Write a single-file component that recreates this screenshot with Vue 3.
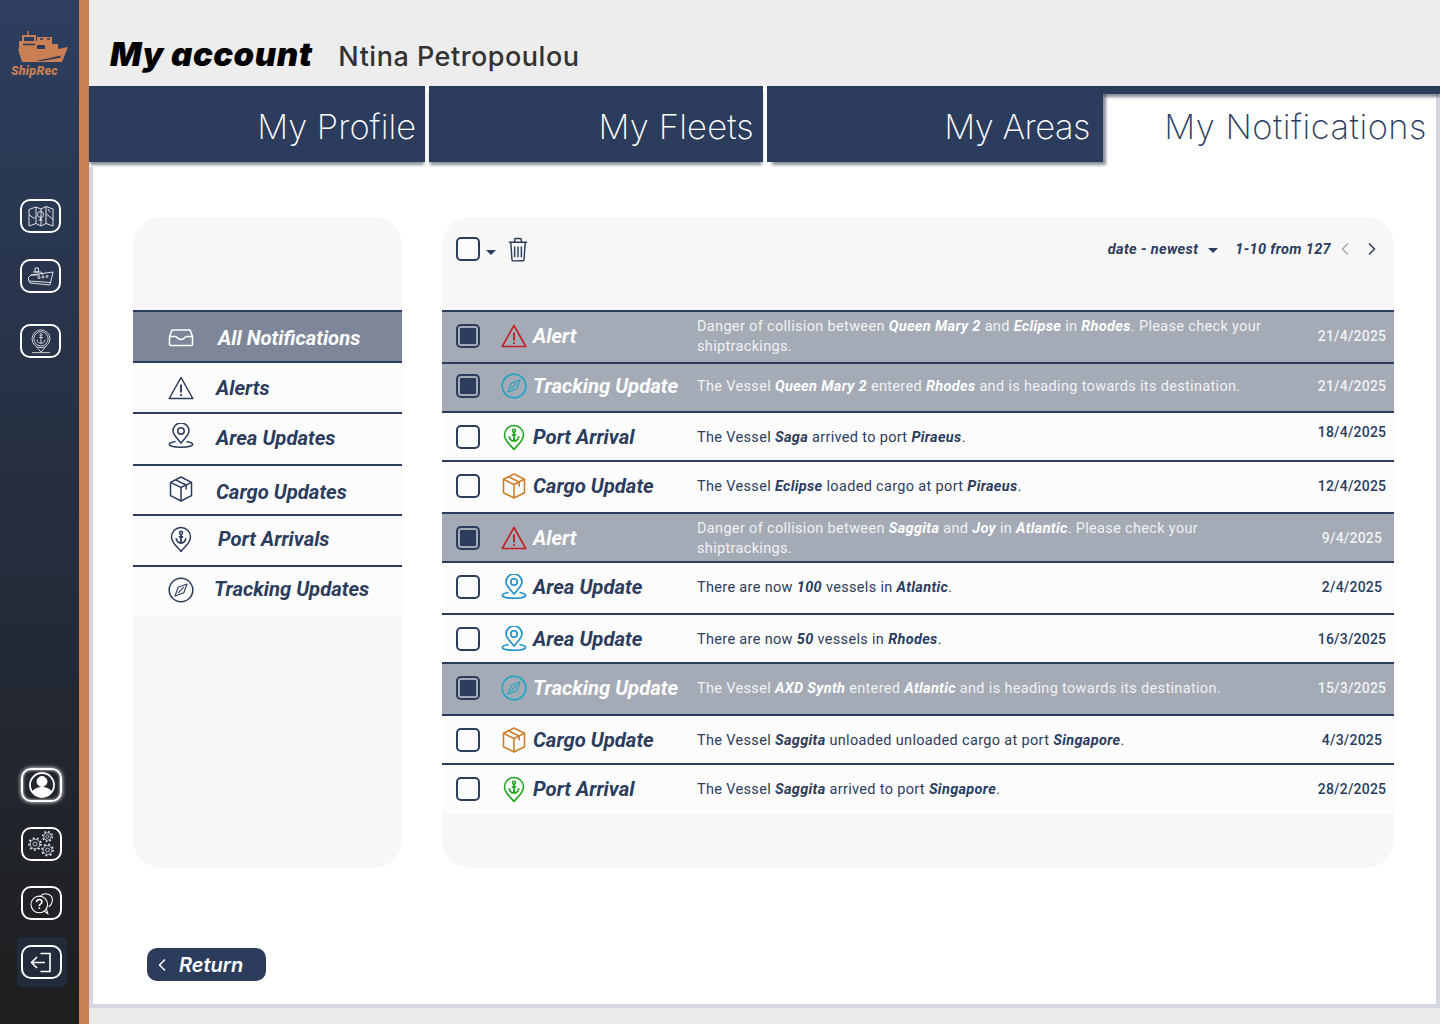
<template>
  <div class="page">
    <svg class="defs" xmlns="http://www.w3.org/2000/svg">
      <symbol id="i-inbox" viewBox="0 0 26 26">
        <path d="M1.500 11.500 4 5h18l2.500 6.500v8a1 1 0 0 1-1 1h-21a1 1 0 0 1-1-1z" />
        <path d="M1.500 11.500h6c1.500 0 2 3 5.500 3s4-3 5.500-3h6" />
      </symbol>
      <symbol id="i-alert" viewBox="0 0 26 26">
        <path d="M13 2.500 24.800 23.500H1.200z" stroke-linejoin="round" />
        <path d="M13 9.500v8M13 19.200v1.800" stroke-width="1.900" />
      </symbol>
      <symbol id="i-area" viewBox="0 0 26 26">
        <path d="M13 20C9.500 15.500 5 12 5 8a8 8 0 0 1 16 0c0 4-4.500 7.500-8 12z" />
        <circle cx="13" cy="8" r="3.200" />
        <path d="M7.500 18.500C3.500 19.200 1.300 20.300 1.300 21.600c0 1.500 5.200 2.700 11.700 2.700s11.700-1.200 11.700-2.700c0-1.300-2.200-2.400-6.200-3.100" />
      </symbol>
      <symbol id="i-cargo" viewBox="0 0 26 26">
        <path d="M13 1 23.500 6.300v13.400L13 25 2.500 19.700V6.300z" stroke-linejoin="round" />
        <path d="M2.500 6.300 13 11.500l10.500-5.200M13 11.500V25M7.500 3.800l10.700 5.200v4.500" />
      </symbol>
      <symbol id="i-port" viewBox="0 0 26 26">
        <path d="M13 25.500C10 21 3.500 17.500 3.500 11a9.500 9.500 0 0 1 19 0c0 6.500-6.500 10-9.500 14.500z" stroke-linejoin="round" />
        <circle cx="13" cy="6.800" r="1.500" />
        <path d="M13 8.300V17M8.300 12.300c0 2.700 2 4.700 4.700 4.700s4.700-2 4.700-4.700M10.800 10.800h4.400" stroke-width="1.800" />
      </symbol>
      <symbol id="i-track" viewBox="0 0 26 26">
        <circle cx="13" cy="13" r="11.800" />
        <path d="M19 7 15.800 15.800 7 19l3.200-8.800zM10.200 15.800l5.600-5.600" stroke-linejoin="round" stroke-width="1.100" />
      </symbol>
      <symbol id="s-map" viewBox="0 0 28 24">
        <path d="M2 5 9 2.500l5 2 5-2.500 7 2.500v17L19 19l-5 2.500-5-2.500-7 2.500z" />
        <path d="M9 2.500V19M14 4.500v17M19 2v17M2 10l5 4 2-2M19 9l7 6M21 4.500l2 3" />
        <circle cx="13.500" cy="10" r="3" />
        <path d="M13.500 13v3M11.500 15.500h4" />
      </symbol>
      <symbol id="s-ship" viewBox="0 0 28 24">
        <path d="M8 3.500h3.500v4H8zM6 7.500h8l2 3M4 10.500h9" />
        <path d="M1.500 13 4 10.500 26 7.500 23 20.500 3 18.500 1.500 16z" stroke-linejoin="round" />
        <circle cx="12" cy="13" r="1" />
        <circle cx="16" cy="12.500" r="1" />
        <circle cx="20" cy="12" r="1" />
        <path d="M2 16.500 23.500 18" />
      </symbol>
      <symbol id="s-pin" viewBox="0 0 28 28">
        <circle cx="14" cy="11" r="10" />
        <circle cx="14" cy="11" r="8" />
        <circle cx="14" cy="6.500" r="1.200" />
        <path d="M14 7.700V16M9.500 12c0 2.500 2 4 4.500 4s4.500-1.500 4.500-4M12 9.500h4M9 20l5 6 5-6M4 26.500h20" />
      </symbol>
      <symbol id="s-user" viewBox="0 0 28 28">
        <circle cx="14" cy="14" r="12" stroke-width="1.800" />
        <circle cx="14" cy="10.500" r="5" fill="currentColor" />
        <path d="M4.500 20.500C7 17.500 10 16.500 14 16.500s7 1 9.500 4C21 24 18 25.500 14 25.500s-7-1.500-9.500-5z" fill="currentColor" />
      </symbol>
      <symbol id="s-gears" viewBox="0 0 30 28">
        <circle cx="8" cy="14" r="6" stroke-width="1.700" stroke-dasharray="1.900 2.300" />
        <circle cx="8" cy="14" r="4.800" />
        <circle cx="8" cy="14" r="2" />
        <circle cx="20.500" cy="6.500" r="4.900" stroke-width="1.500" stroke-dasharray="1.700 2.150" />
        <circle cx="20.500" cy="6.500" r="3.800" />
        <circle cx="20.500" cy="6.500" r="1.600" />
        <circle cx="20.500" cy="20" r="5.600" stroke-width="1.700" stroke-dasharray="1.900 2.500" />
        <circle cx="20.500" cy="20" r="4.400" />
        <circle cx="20.500" cy="20" r="1.900" />
      </symbol>
      <symbol id="s-help" viewBox="0 0 28 28">
        <path d="M13 5.200a9 9 0 0 1 8.500-1.500c5 1.500 6 7 3.500 11-.9 1.400-1.800 2.400-3 3" />
        <circle cx="11.500" cy="15" r="9.300" />
        <path d="M17 22.500l4 3-1.300-5" />
        <path d="M8.500 12.500c0-4 6-4 6 0 0 2-3 2-3 4.500M11.500 18.500v1.600" stroke-width="1.700" />
      </symbol>
      <symbol id="s-exit" viewBox="0 0 28 24">
        <path d="M3.500 12H17M9 6.500 3.500 12 9 17.500M12.500 3H22v18h-9.500" />
      </symbol>
    </svg>

    <aside class="sidebar">
      <div class="logo">
        <svg class="logo-ship" viewBox="12 30 60 35" xmlns="http://www.w3.org/2000/svg">
          <path d="M27.500 31h1.400v4h-1.400zM22 35h14v6h-2v-4H24v4h-2zM19 41h18v8H19zM37 37h8v8h-8zM45 37h7v8h-7zM45 44h13v5H45z" fill="#c97e54" />
          <path d="M18 49h40l10-2-6 15H22z" fill="#c97e54" />
          <path d="M23 44.500h12M40 39h3M47 39h3" stroke="#2b3a58" stroke-width="1.600" />
          <path d="M36 61l25-5.500-.8 2.200L42 61z" fill="#2b3a58" />
        </svg>
        <div class="logo-text">ShipRec</div>
      </div>
      <nav class="side-top">
        <a v-for="n in topNav" :key="n" class="side-btn"><svg class="side-ico"><use :href="`#s-${n}`" /></svg></a>
      </nav>
      <nav class="side-bottom">
        <a class="side-btn glow"><svg class="side-ico user"><use href="#s-user" /></svg></a>
        <a class="side-btn"><svg class="side-ico gears"><use href="#s-gears" /></svg></a>
        <a class="side-btn"><svg class="side-ico help"><use href="#s-help" /></svg></a>
        <div class="exit-wrap">
          <a class="side-btn"><svg class="side-ico exit"><use href="#s-exit" /></svg></a>
        </div>
      </nav>
    </aside>

    <main class="main">
      <header class="header">
        <h1>My account</h1>
        <span class="user-name">Ntina Petropoulou</span>
      </header>

      <div class="tabs">
        <div v-for="t in tabs" :key="t" class="tab">{{ t }}</div>
        <div class="tab-active">My Notifications</div>
      </div>

      <section class="panel">
        <div class="columns">
          <div class="filters">
            <div
              v-for="f in filters"
              :key="f.label"
              class="filter"
              :class="{ active: f.active }"
              :style="{ height: f.h + 'px', paddingTop: (f.pt || 0) + 'px', paddingBottom: (f.pb || 0) + 'px' }"
            >
              <svg class="filter-ico"><use :href="`#i-${f.icon}`" /></svg>
              <span :style="{ marginLeft: f.gap + 'px', marginTop: (f.tm || 0) + 'px' }">{{ f.label }}</span>
            </div>
          </div>

          <div class="list">
            <div class="toolbar">
              <span class="check"></span>
              <span class="caret tool-caret"></span>
              <svg class="trash" viewBox="0 0 22 26" xmlns="http://www.w3.org/2000/svg">
                <path d="M1.500 5.500h19M7.500 5.500V2.500a1 1 0 0 1 1-1h5a1 1 0 0 1 1 1v3M3.500 5.500l1.200 18a1.500 1.500 0 0 0 1.500 1.300h9.600a1.500 1.500 0 0 0 1.500-1.300l1.200-18M7.500 10v11M11 10v11M14.500 10v11" />
              </svg>
              <div class="pager">
                <span>date - newest</span>
                <span class="caret sort-caret"></span>
                <span class="count">1-10 from 127</span>
                <svg class="chev prev" viewBox="0 0 10 14"><path d="M8 1.500 2.500 7 8 12.500" /></svg>
                <svg class="chev next" viewBox="0 0 10 14"><path d="M2 1.500 7.500 7 2 12.500" /></svg>
              </div>
            </div>

            <div
              v-for="(r, idx) in rows"
              :key="idx"
              class="row"
              :class="{ selected: r.sel }"
              :style="{ height: r.h + 'px', paddingBottom: r.pb + 'px' }"
            >
              <span class="check" :class="{ checked: r.sel }"></span>
              <svg class="row-ico" :class="r.icon"><use :href="`#i-${r.icon}`" /></svg>
              <span class="row-title">{{ r.title }}</span>
              <p class="row-text">
                <template v-for="(part, i) in r.parts" :key="i">
                  <b v-if="i % 2">{{ part }}</b>
                  <span v-else>{{ part }}</span>
                </template>
              </p>
              <span class="row-date" :class="{ up: r.up }">{{ r.date }}</span>
            </div>
          </div>
        </div>

        <button class="return">
          <svg class="chev" viewBox="0 0 10 14"><path d="M8 1.500 2.500 7 8 12.500" /></svg>
          <span>Return</span>
        </button>
      </section>
    </main>
  </div>
</template>

<script setup>
const topNav = ['map', 'ship', 'pin']
const tabs = ['My Profile', 'My Fleets', 'My Areas']

const filters = [
  { label: 'All Notifications', icon: 'inbox', h: 51, gap: 24, pt: 3, active: true },
  { label: 'Alerts', icon: 'alert', h: 51, gap: 22 },
  { label: 'Area Updates', icon: 'area', h: 52, gap: 22, pb: 6, tm: 4 },
  { label: 'Cargo Updates', icon: 'cargo', h: 50, gap: 22, pb: 2, tm: 6 },
  { label: 'Port Arrivals', icon: 'port', h: 51, gap: 24, pb: 4, tm: 1 },
  { label: 'Tracking Updates', icon: 'track', h: 50, gap: 20, pb: 2, tm: -2 }
]

const rows = [
  { h: 52, pb: 2, sel: true, icon: 'alert', title: 'Alert', date: '21/4/2025',
    parts: ['Danger of collision between ', 'Queen Mary 2', ' and ', 'Eclipse', ' in ', 'Rhodes', '. Please check your shiptrackings.'] },
  { h: 49, pb: 3, sel: true, icon: 'track', title: 'Tracking Update', date: '21/4/2025',
    parts: ['The Vessel ', 'Queen Mary 2', ' entered ', 'Rhodes', ' and is heading towards its destination.'] },
  { h: 49, pb: 0, icon: 'port', title: 'Port Arrival', date: '18/4/2025', up: true,
    parts: ['The Vessel ', 'Saga', ' arrived to port ', 'Piraeus', '.'] },
  { h: 52, pb: 2, icon: 'cargo', title: 'Cargo Update', date: '12/4/2025',
    parts: ['The Vessel ', 'Eclipse', ' loaded cargo at port ', 'Piraeus', '.'] },
  { h: 49, pb: 0, sel: true, icon: 'alert', title: 'Alert', date: '9/4/2025',
    parts: ['Danger of collision between ', 'Saggita', ' and ', 'Joy', ' in ', 'Atlantic', '. Please check your shiptrackings.'] },
  { h: 52, pb: 2, icon: 'area', title: 'Area Update', date: '2/4/2025',
    parts: ['There are now ', '100', ' vessels in ', 'Atlantic', '.'] },
  { h: 49, pb: 0, icon: 'area', title: 'Area Update', date: '16/3/2025',
    parts: ['There are now ', '50', ' vessels in ', 'Rhodes', '.'] },
  { h: 52, pb: 2, sel: true, icon: 'track', title: 'Tracking Update', date: '15/3/2025',
    parts: ['The Vessel ', 'AXD Synth', ' entered ', 'Atlantic', ' and is heading towards its destination.'] },
  { h: 49, pb: 0, icon: 'cargo', title: 'Cargo Update', date: '4/3/2025',
    parts: ['The Vessel ', 'Saggita', ' unloaded unloaded cargo at port ', 'Singapore', '.'] },
  { h: 51, pb: 1, icon: 'port', title: 'Port Arrival', date: '28/2/2025',
    parts: ['The Vessel ', 'Saggita', ' arrived to port ', 'Singapore', '.'] }
]
</script>

<style>
body {
  background: #ebebeb;
}
</style>

<style scoped>
.defs {
  display: none;
}

.page {
  display: flex;
  width: 1440px;
  height: 1024px;
  overflow: hidden;
  font-family: Roboto, "Liberation Sans", sans-serif;
  color: #2c3c5c;
  background: #ebebeb;
}

/* sidebar */
.sidebar {
  flex: none;
  display: flex;
  flex-direction: column;
  box-sizing: border-box;
  width: 89px;
  height: 100%;
  padding-top: 30px;
  border-right: 10px solid #c97e54;
  background: linear-gradient(180deg, #2d3e5f 0%, #1e1e1e 100%);
}

.logo-ship {
  display: block;
  width: 60px;
  height: 35px;
  margin-left: 12px;
}

.logo-text {
  margin-left: 11px;
  font-size: 12.5px;
  line-height: 12px;
  font-weight: 900;
  font-style: italic;
  letter-spacing: 0.2px;
  color: #c97e54;
}

.side-top {
  display: flex;
  flex-direction: column;
  margin-top: 122px;
  padding-left: 20px;
}

.side-top .side-btn + .side-btn {
  margin-top: 26px;
}

.side-top .side-btn:last-child {
  margin-top: 31px;
}

.side-btn {
  display: flex;
  align-items: center;
  justify-content: center;
  box-sizing: border-box;
  width: 41px;
  height: 34px;
  border: 2.5px solid #fff;
  border-radius: 10px;
}

.side-ico {
  width: 28px;
  height: 25px;
  fill: none;
  stroke: #dfe2e8;
  stroke-width: 1;
  color: #fff;
}

.side-ico.user {
  width: 28px;
  height: 28px;
  stroke: #fff;
}

.side-ico.gears {
  width: 30px;
  height: 28px;
  stroke-width: 0.8;
}

.side-ico.help {
  width: 25px;
  height: 25px;
  stroke: #fff;
  stroke-width: 1.2;
}

.side-ico.exit {
  stroke: #fff;
  stroke-width: 1.6;
}

.side-bottom {
  display: flex;
  flex-direction: column;
  gap: 25px;
  margin-top: auto;
  padding: 0 0 45px 21px;
}

.glow {
  box-shadow: 0 0 4px #fff, inset 0 0 3px #fff;
}

.exit-wrap {
  width: 41px;
  margin: -8px 0 -8px -4px;
  padding: 8px 5px 8px 4px;
  border-radius: 5px;
  background: #222b3a;
}

/* header + tabs */
.main {
  flex: 1;
  display: flex;
  flex-direction: column;
  min-width: 0;
}

.header {
  flex: none;
  display: flex;
  align-items: baseline;
  gap: 26px;
  box-sizing: border-box;
  height: 86px;
  padding: 33px 0 0 21px;
  background: #ededed;
}

.header h1 {
  margin: 0;
  font-family: Inter, sans-serif;
  font-size: 33px;
  line-height: 42px;
  font-weight: 900;
  font-style: italic;
  letter-spacing: 0.5px;
  color: #000;
}

.user-name {
  font-family: Inter, sans-serif;
  font-size: 27px;
  font-weight: 500;
  letter-spacing: 0.5px;
  color: #333;
}

.tabs {
  flex: none;
  display: flex;
  height: 81px;
  background: #fff;
}

.tab {
  flex: none;
  box-sizing: border-box;
  width: 336px;
  height: 76px;
  margin-right: 4px;
  padding: 17px 9px 0 0;
  font-family: Inter, sans-serif;
  font-size: 34.5px;
  line-height: 48px;
  font-weight: 200;
  text-align: right;
  color: #fff;
  background: #2c3c5c;
  box-shadow: 0 4px 3px -1px rgba(40, 50, 70, 0.55);
}

.tab:nth-child(2) {
  width: 334px;
  letter-spacing: 0.2px;
}

.tab:nth-child(3) {
  width: 336px;
  margin-right: 5px;
  padding-right: 13px;
  letter-spacing: -0.5px;
  box-shadow: 4px 4px 3px -1px rgba(40, 50, 70, 0.55);
}

.tab-active {
  position: relative;
  flex: 1;
  box-sizing: border-box;
  padding: 17px 9px 0 0;
  border-right: 4px solid #d4d7e2;
  font-family: Inter, sans-serif;
  font-size: 34.5px;
  line-height: 48px;
  font-weight: 200;
  letter-spacing: 0.5px;
  text-align: right;
  color: #2c3c5c;
  background: #fff;
}

/* dark strip that runs over the active tab */
.tab-active::before {
  content: "";
  position: absolute;
  top: 0;
  left: -5px;
  right: -4px;
  height: 8px;
  background: #2c3c5c;
  box-shadow: 0 3px 3px rgba(40, 50, 70, 0.55);
}

.panel {
  flex: none;
  box-sizing: border-box;
  height: 841px;
  padding: 50px 42px 0 40px;
  border: 4px solid #d4d7e2;
  border-top: 0;
  background: #fff;
}

.columns {
  display: flex;
  gap: 40px;
  height: 651px;
}

/* left filter */
.filters {
  flex: none;
  width: 269px;
  box-sizing: border-box;
  padding-top: 93px;
  border-radius: 28px;
  background: #f7f7f7;
}

.filter {
  display: flex;
  align-items: center;
  box-sizing: border-box;
  padding-left: 35px;
  border-top: 2px solid #2c3c5c;
  font-size: 20.3px;
  font-weight: 700;
  font-style: italic;
  background: #fcfcfc;
}

.filter.active {
  color: #fff;
  background: #7e8799;
  box-shadow: 0 2px 0 #2c3c5c;
}

.filter-ico {
  flex: none;
  width: 26px;
  height: 26px;
  fill: none;
  stroke: currentColor;
  stroke-width: 1.5;
}

/* right list */
.list {
  flex: 1;
  min-width: 0;
  border-radius: 28px;
  background: #f7f7f7;
  overflow: hidden;
}

.toolbar {
  display: flex;
  align-items: flex-start;
  box-sizing: border-box;
  height: 93px;
  padding: 20px 14px 0;
}

.check {
  flex: none;
  box-sizing: border-box;
  width: 24px;
  height: 24px;
  padding: 2px;
  border: 2.5px solid #2c3c5c;
  border-radius: 5px;
  background: #fcfcfc;
}

.check.checked {
  background: #2c3c5c;
  background-clip: content-box;
}

.caret {
  flex: none;
  border-left: 5px solid transparent;
  border-right: 5px solid transparent;
  border-top: 5px solid #2c3c5c;
}

.tool-caret {
  margin: 13px 0 0 6px;
}

.trash {
  flex: none;
  width: 22px;
  height: 25px;
  margin-left: 11px;
  fill: none;
  stroke: #2c3c5c;
  stroke-width: 1.5;
}

.pager {
  display: flex;
  align-items: center;
  margin-left: auto;
  height: 24px;
  font-size: 14.5px;
  font-weight: 700;
  font-style: italic;
  letter-spacing: 0.35px;
  white-space: nowrap;
}

.sort-caret {
  margin: 3px 0 0 10px;
}

.count {
  margin-left: 17px;
}

.chev {
  flex: none;
  width: 10px;
  height: 14px;
  fill: none;
  stroke: #2c3c5c;
  stroke-width: 1.5;
}

.chev.prev {
  margin-left: 9px;
  stroke: #a4abb6;
}

.chev.next {
  margin: 0 3px 0 17px;
}

.row {
  display: flex;
  align-items: center;
  box-sizing: border-box;
  padding-left: 14px;
  border-top: 2px solid #2c3c5c;
  background: #fcfcfc;
}

.row.selected {
  color: #f2f2f2;
  background: #a4abb6;
}

.row-ico {
  flex: none;
  width: 26px;
  height: 26px;
  margin-left: 21px;
  fill: none;
  stroke: currentColor;
  stroke-width: 1.6;
}

.row-ico.alert {
  color: #c41e26;
}

.row-ico.track {
  color: #17a5c4;
}

.row-ico.port {
  color: #1fa51f;
}

.row-ico.cargo {
  color: #cd7f2c;
}

.row-ico.area {
  color: #1a8fc9;
}

.row-title {
  flex: none;
  width: 164px;
  margin-left: 6px;
  font-size: 20.3px;
  font-weight: 700;
  font-style: italic;
  white-space: nowrap;
}

.selected .row-title {
  color: #fff;
}

.row-text {
  flex: none;
  width: 580px;
  margin: 2px 33px 0 0;
  font-size: 14.5px;
  line-height: 20px;
  letter-spacing: 0.33px;
}

.row-text b {
  font-weight: 700;
  font-style: italic;
}

.selected .row-text b {
  color: #fff;
}

.row-date {
  flex: none;
  width: 84px;
  font-size: 14px;
  font-weight: 500;
  letter-spacing: 0.2px;
  text-align: center;
}

.row-date.up {
  padding-bottom: 9px;
}

.return {
  display: flex;
  align-items: center;
  width: 119px;
  height: 33px;
  margin: 80px 0 0 14px;
  padding: 0 0 0 10px;
  border: 0;
  border-radius: 10px;
  font-family: Inter, sans-serif;
  font-size: 20px;
  font-weight: 600;
  font-style: italic;
  color: #fff;
  background: #2c3c5c;
}

.return .chev {
  stroke: #fff;
  margin-right: 12px;
}
</style>
